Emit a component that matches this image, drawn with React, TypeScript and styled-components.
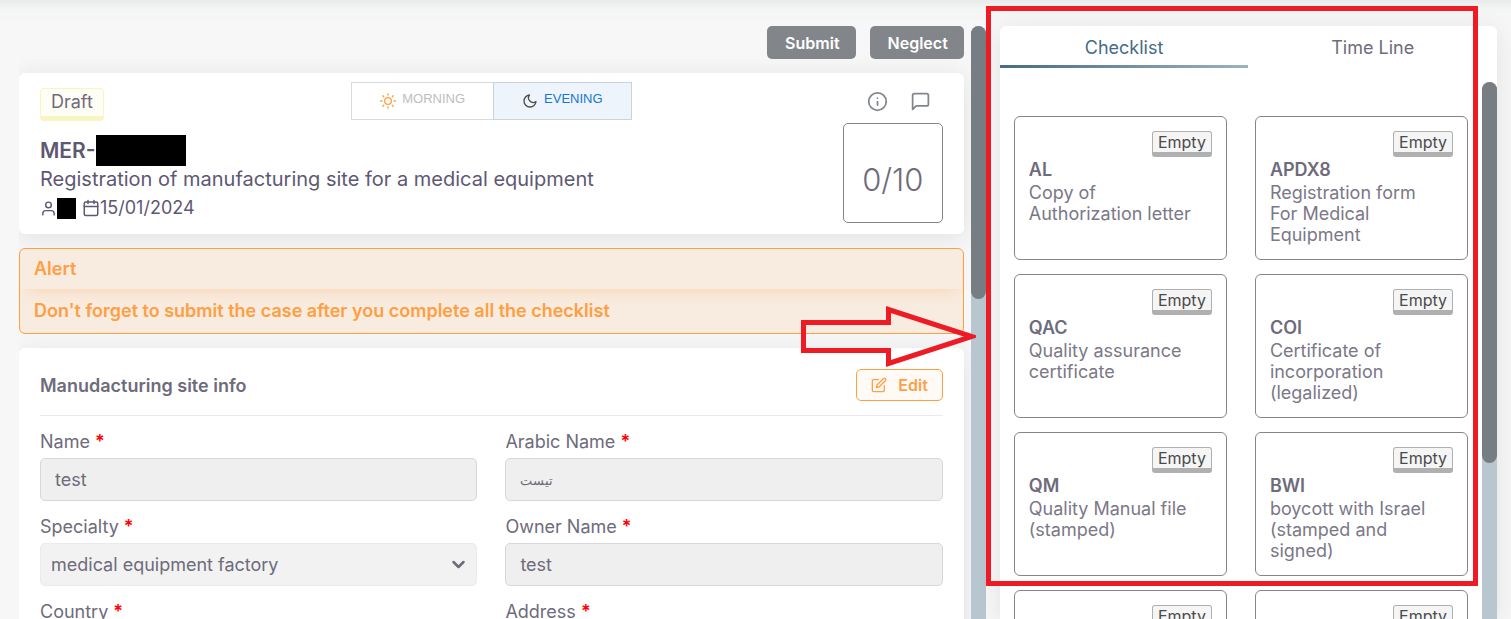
import React, { useId } from 'react';
import styled, { createGlobalStyle, css } from 'styled-components';

const GlobalStyle = createGlobalStyle`
  *, *::before, *::after { box-sizing: border-box; }
  html, body { margin: 0; height: 100%; overflow: hidden; }
  body {
    background: #f7f7f7;
    color: #6e6b7b;
    font-family: Inter, "Noto Sans", sans-serif;
    font-size: 18px;
    line-height: 21px;
  }
  #root { height: 100%; }
  button, input, select { font: inherit; color: inherit; margin: 0; }
  h1, h2, h3, p { margin: 0; font-weight: 400; }
`;

const cardShadow = '0 4px 24px rgba(34, 41, 47, 0.1)';

const Page = styled.div`
  display: grid;
  grid-template-columns: minmax(0, 35fr) minmax(0, 18fr);
  gap: 14px;
  height: 100vh;
  padding: 0 14px 0 19px;
  background: linear-gradient(#e9ebeb, #f4f5f5 10px, #f7f7f7 26px);
  overflow: hidden;
`;

const CaseColumn = styled.main`
  position: relative;
  display: flex;
  padding-top: 26px;
  min-height: 0;
`;

const CaseScroll = styled.div`
  flex: 1;
  min-width: 0;
  display: flex;
  flex-direction: column;
  gap: 14px;
  padding-right: 7px;
  overflow: hidden;
`;

const Track = styled.div`
  flex: none;
  width: 15px;
  background: #b8c6cf;
  border-radius: 8px 8px 0 0;
`;

const Thumb = styled.div<{ $share: number }>`
  height: ${(p) => p.$share}%;
  background: #767e84;
  border-radius: 8px;
`;

const Actions = styled.div`
  flex: none;
  display: flex;
  justify-content: flex-end;
  gap: 14px;
`;

const ActionButton = styled.button`
  height: 33px;
  padding: 1px 16px 0 18px;
  border: 0;
  border-radius: 5px;
  background: #82868b;
  color: #fff;
  font-size: 16px;
  font-weight: 600;
`;

const Card = styled.section`
  flex: none;
  background: #fff;
  border-radius: 6px;
  box-shadow: ${cardShadow};
`;

const SummaryCard = styled(Card)`
  padding: 9px 21px 11px;
`;

const SummaryTop = styled.div`
  display: grid;
  grid-template-columns: 1fr auto 1fr;
  align-items: center;
  height: 38px;
`;

const DraftBadge = styled.span`
  justify-self: start;
  align-self: start;
  margin-top: 6px;
  height: 33px;
  padding: 0 10px;
  border: 1px solid #f8f5c0;
  border-bottom-width: 5px;
  border-radius: 4px;
  background: #fffef6;
  line-height: 25px;
`;

const ToggleGroup = styled.div`
  display: flex;
  align-self: start;
  height: 38px;
`;

const ToggleButton = styled.button<{ $active?: boolean }>`
  display: flex;
  align-items: center;
  gap: 6px;
  padding: 0 28px;
  border: 1px solid #d8dbde;
  background: #fff;
  color: #bdbdbd;
  font-family: "Liberation Sans", Arial, sans-serif;
  font-size: 13px;
  line-height: 20px;
  & + & { margin-left: -1px; }
  span { margin-bottom: 4px; }
  ${(p) => p.$active && css`
    background: #edf4fc;
    border-color: #c9d3de;
    color: #1976d2;
  `}
`;

const IconRow = styled.div`
  display: flex;
  justify-content: flex-end;
  gap: 22px;
  padding-right: 12px;
`;

const IconButton = styled.button`
  display: flex;
  padding: 0;
  border: 0;
  background: none;
  color: #82868b;
`;

const SummaryBody = styled.div`
  display: flex;
  justify-content: space-between;
  height: 103px;
  padding-top: 3px;
`;

const CaseDetails = styled.div`
  padding-top: 12px;
  color: #5e5873;
`;

const CaseTitle = styled.h1`
  display: flex;
  align-items: center;
  font-size: 21px;
  line-height: 30px;
  font-weight: 600;
`;

const CaseSubtitle = styled.p`
  font-size: 20px;
  line-height: 26px;
`;

const CaseMeta = styled.p`
  display: flex;
  align-items: center;
  line-height: 32px;
`;

const Redacted = styled.span<{ $width: number; $height: number }>`
  width: ${(p) => p.$width}px;
  height: ${(p) => p.$height}px;
  background: #000;
`;

const MetaDate = styled.span`
  display: flex;
  align-items: center;
  margin-left: 6px;
`;

const Score = styled.div`
  display: flex;
  align-items: center;
  justify-content: center;
  width: 100px;
  height: 100px;
  padding-top: 12px;
  border: 1px solid #82868b;
  border-radius: 5px;
  font-size: 31px;
  font-weight: 300;
`;

const Alert = styled.section`
  flex: none;
  border: 1px solid #ff9f43;
  border-radius: 6px;
  background: #f8ebdf;
  color: #ff9f43;
`;

const AlertHeading = styled.h2`
  padding: 0 14px;
  font-size: 18px;
  line-height: 40px;
  font-weight: 600;
  box-shadow: 0 6px 15px -7px rgba(255, 159, 67, 0.4);
`;

const AlertText = styled.p`
  padding: 0 14px;
  line-height: 44px;
  font-weight: 600;
`;

const FormCard = styled(Card)`
  padding: 21px;
`;

const FormHeader = styled.header`
  display: flex;
  align-items: center;
  justify-content: space-between;
  padding-bottom: 14px;
  border-bottom: 1px solid #ebe9f1;
  h2 { font-size: 18px; font-weight: 600; }
`;

const EditButton = styled.button`
  display: flex;
  align-items: center;
  gap: 11px;
  height: 32px;
  padding: 0 14px;
  border: 1px solid #ff9f43;
  border-radius: 5px;
  background: #fffaf6;
  color: #ff9f43;
  font-size: 16px;
  font-weight: 600;
`;

const Fields = styled.div`
  display: grid;
  grid-template-columns: repeat(2, minmax(0, 1fr));
  gap: 13px 28px;
  padding-top: 13px;
`;

const FieldBox = styled.div`
  label {
    display: block;
    margin-bottom: 3px;
    line-height: 26px;
  }
`;

const Required = styled.span`
  color: #ff0000;
  font-weight: 600;
`;

const TextInput = styled.input`
  display: block;
  width: 100%;
  height: 43px;
  padding: 0 14px;
  border: 1px solid #d8d6de;
  border-radius: 5px;
  background: #efefef;
  outline: none;
  &:lang(ar) { font-size: 13px; }
`;

const SelectWrap = styled.div`
  position: relative;
  select {
    display: block;
    width: 100%;
    height: 43px;
    padding: 0 36px 0 10px;
    border: 1px solid #ebe9f1;
    border-radius: 5px;
    background: #f2f2f2;
    appearance: none;
    outline: none;
  }
  svg {
    position: absolute;
    right: 11px;
    top: 14px;
    pointer-events: none;
  }
`;

const SidePanel = styled.aside`
  position: relative;
  margin-top: 26px;
  display: flex;
  flex-direction: column;
  min-height: 0;
  background: #fff;
  border-radius: 6px 6px 0 0;
  box-shadow: ${cardShadow};
`;

const Tabs = styled.div`
  flex: none;
  display: grid;
  grid-template-columns: 1fr 1fr;
  margin-bottom: 14px;
`;

const Tab = styled.button<{ $active?: boolean }>`
  height: 42px;
  padding: 0;
  border: 0;
  background: none;
  color: ${(p) => (p.$active ? '#456b86' : '#6e6b7b')};
  ${(p) => p.$active && css`
    background: linear-gradient(90deg, #456b86, #9cb2bf) bottom / 100% 3px no-repeat;
  `}
`;

const ChecklistArea = styled.div`
  flex: 1;
  min-height: 0;
  display: flex;
  overflow: hidden;
`;

const ChecklistGrid = styled.ul`
  flex: 1;
  display: grid;
  grid-template-columns: repeat(2, minmax(0, 1fr));
  grid-auto-rows: 144px;
  gap: 14px 28px;
  margin: 0;
  padding: 34px 14px 14px;
  list-style: none;
`;

const Item = styled.li`
  display: flex;
  flex-direction: column;
  padding: 14px;
  border: 1px solid #82868b;
  border-radius: 6px;
  color: #7b7887;
  h3 {
    margin-top: 1px;
    color: #6e6b7b;
    font-size: 18px;
    line-height: 24px;
    font-weight: 600;
  }
  p { white-space: pre-line; }
`;

const EmptyBadge = styled.span`
  align-self: flex-end;
  height: 26px;
  padding: 0 5px;
  border: 1px solid #b0b0b0;
  border-bottom-width: 5px;
  border-radius: 3px;
  background: #f5f5f5;
  color: #4b4b4b;
  font-size: 16px;
  line-height: 21px;
`;

const Highlight = styled.div`
  position: absolute;
  z-index: 2;
  top: -20px;
  left: -14px;
  right: 19px;
  height: 580px;
  border: 5px solid #ed1c24;
  pointer-events: none;
`;

const Arrow = styled.svg`
  position: absolute;
  z-index: 3;
  top: 303px;
  right: 10px;
  pointer-events: none;
`;

type IconProps = { size: number; width?: number; children: React.ReactNode; color?: string };

const Icon = ({ size, width = 2, color = 'currentColor', children }: IconProps) => (
  <svg width={size} height={size} viewBox="0 0 24 24" fill="none" stroke={color}
    strokeWidth={width} strokeLinecap="round" strokeLinejoin="round" aria-hidden="true">
    {children}
  </svg>
);

const Field = ({ label, children }: { label: string; children: (id: string) => React.ReactNode }) => {
  const id = useId();
  return (
    <FieldBox>
      <label htmlFor={id}>{label} <Required>*</Required></label>
      {children(id)}
    </FieldBox>
  );
};

const checklist = [
  { code: 'AL', text: 'Copy of\nAuthorization letter' },
  { code: 'APDX8', text: 'Registration form\nFor Medical\nEquipment' },
  { code: 'QAC', text: 'Quality assurance\ncertificate' },
  { code: 'COI', text: 'Certificate of\nincorporation\n(legalized)' },
  { code: 'QM', text: 'Quality Manual file\n(stamped)' },
  { code: 'BWI', text: 'boycott with Israel\n(stamped and\nsigned)' },
  { code: '', text: '' },
  { code: '', text: '' },
];

export default function App() {
  return (
    <>
      <GlobalStyle />
      <Page>
        <CaseColumn>
          <CaseScroll>
            <Actions>
              <ActionButton type="button">Submit</ActionButton>
              <ActionButton type="button">Neglect</ActionButton>
            </Actions>

            <SummaryCard>
              <SummaryTop>
                <DraftBadge>Draft</DraftBadge>
                <ToggleGroup>
                  <ToggleButton type="button">
                    <Icon size={16} color="#ff9f43">
                      <circle cx="12" cy="12" r="5" />
                      <path d="M12 1v2M12 21v2M4.2 4.2l1.4 1.4M18.4 18.4l1.4 1.4M1 12h2M21 12h2M4.2 19.8l1.4-1.4M18.4 5.6l1.4-1.4" />
                    </Icon>
                    <span>MORNING</span>
                  </ToggleButton>
                  <ToggleButton type="button" $active aria-pressed="true">
                    <Icon size={16} color="#4b4b4b">
                      <path d="M21 12.79A9 9 0 1 1 11.21 3 7 7 0 0 0 21 12.79z" />
                    </Icon>
                    <span>EVENING</span>
                  </ToggleButton>
                </ToggleGroup>
                <IconRow>
                  <IconButton type="button" aria-label="Information">
                    <Icon size={21}>
                      <circle cx="12" cy="12" r="10" />
                      <path d="M12 16v-4M12 8h.01" />
                    </Icon>
                  </IconButton>
                  <IconButton type="button" aria-label="Comments">
                    <Icon size={21}>
                      <path d="M21 15a2 2 0 0 1-2 2H7l-4 4V5a2 2 0 0 1 2-2h14a2 2 0 0 1 2 2z" />
                    </Icon>
                  </IconButton>
                </IconRow>
              </SummaryTop>
              <SummaryBody>
                <CaseDetails>
                  <CaseTitle>MER-<Redacted $width={90} $height={31} /></CaseTitle>
                  <CaseSubtitle>Registration of manufacturing site for a medical equipment</CaseSubtitle>
                  <CaseMeta>
                    <Icon size={17}>
                      <path d="M20 21v-2a4 4 0 0 0-4-4H8a4 4 0 0 0-4 4v2" />
                      <circle cx="12" cy="7" r="4" />
                    </Icon>
                    <Redacted $width={19} $height={21} />
                    <MetaDate>
                      <Icon size={18}>
                        <rect x="3" y="4" width="18" height="18" rx="2" />
                        <path d="M16 2v4M8 2v4M3 10h18" />
                      </Icon>
                      15/01/2024
                    </MetaDate>
                  </CaseMeta>
                </CaseDetails>
                <Score>0/10</Score>
              </SummaryBody>
            </SummaryCard>

            <Alert>
              <AlertHeading>Alert</AlertHeading>
              <AlertText>Don't forget to submit the case after you complete all the checklist</AlertText>
            </Alert>

            <FormCard>
              <FormHeader>
                <h2>Manudacturing site info</h2>
                <EditButton type="button">
                  <Icon size={16}>
                    <path d="M11 4H4a2 2 0 0 0-2 2v14a2 2 0 0 0 2 2h14a2 2 0 0 0 2-2v-7" />
                    <path d="M18.5 2.5a2.121 2.121 0 0 1 3 3L12 15l-4 1 1-4 9.5-9.5z" />
                  </Icon>
                  Edit
                </EditButton>
              </FormHeader>
              <Fields>
                <Field label="Name">{(id) => <TextInput id={id} readOnly value="test" />}</Field>
                <Field label="Arabic Name">{(id) => <TextInput id={id} lang="ar" readOnly value="تيست" />}</Field>
                <Field label="Specialty">
                  {(id) => (
                    <SelectWrap>
                      <select id={id}>
                        <option>medical equipment factory</option>
                      </select>
                      <Icon size={15} width={4}><path d="M4 8l8 8 8-8" /></Icon>
                    </SelectWrap>
                  )}
                </Field>
                <Field label="Owner Name">{(id) => <TextInput id={id} readOnly value="test" />}</Field>
                <Field label="Country">{(id) => <TextInput id={id} readOnly />}</Field>
                <Field label="Address">{(id) => <TextInput id={id} readOnly />}</Field>
              </Fields>
            </FormCard>
          </CaseScroll>
          <Track><Thumb $share={46} /></Track>
          <Arrow width="178" height="66" viewBox="0 0 178 66" fill="none" stroke="#ed1c24" strokeWidth="5" aria-hidden="true">
            <path d="M5.500 19.500H90.500V6.500L174 33.500L90.500 60.500V47.500H5.500Z" />
          </Arrow>
        </CaseColumn>

        <SidePanel>
          <Tabs role="tablist">
            <Tab type="button" role="tab" aria-selected="true" $active>Checklist</Tab>
            <Tab type="button" role="tab" aria-selected="false">Time Line</Tab>
          </Tabs>
          <ChecklistArea>
            <ChecklistGrid>
              {checklist.map((item, i) => (
                <Item key={i}>
                  <EmptyBadge>Empty</EmptyBadge>
                  <h3>{item.code}</h3>
                  <p>{item.text}</p>
                </Item>
              ))}
            </ChecklistGrid>
            <Track><Thumb $share={71} /></Track>
          </ChecklistArea>
          <Highlight />
        </SidePanel>
      </Page>
    </>
  );
}
